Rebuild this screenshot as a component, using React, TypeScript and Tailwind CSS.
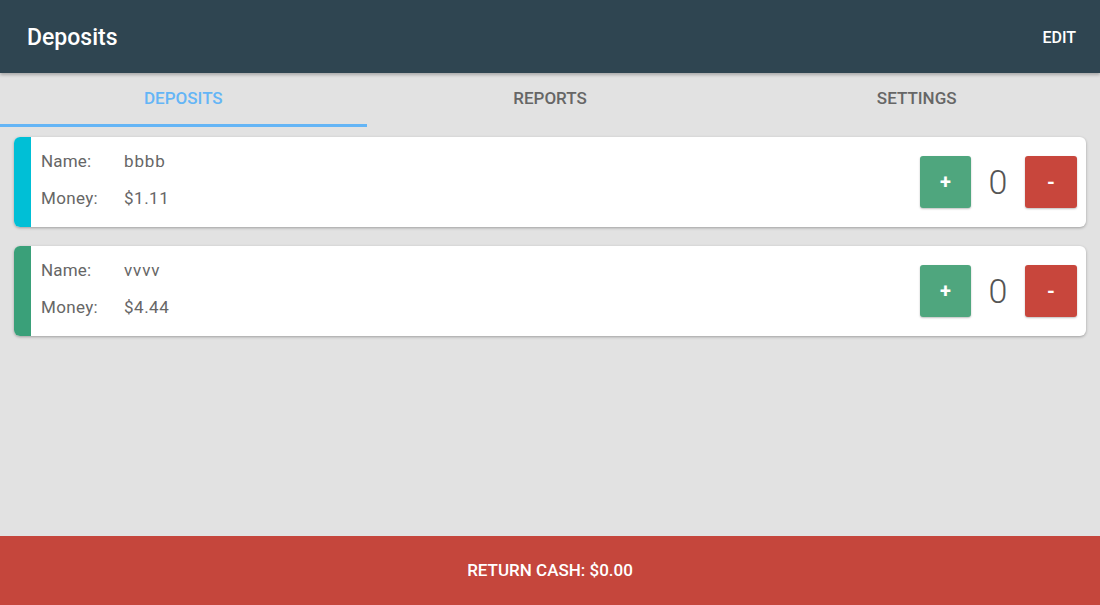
import { useState } from "react";

type Deposit = {
  id: number;
  name: string;
  money: string;
  stripe: string;
};

const deposits: Deposit[] = [
  { id: 1, name: "bbbb", money: "$1.11", stripe: "bg-[#00bfd6]" },
  { id: 2, name: "vvvv", money: "$4.44", stripe: "bg-[#3aa079]" },
];

const tabs = ["DEPOSITS", "REPORTS", "SETTINGS"];

function DepositCard({ deposit }: { deposit: Deposit }) {
  const [count, setCount] = useState(0);

  return (
    <div className="flex h-[90px] rounded-md bg-white shadow-[0_1px_3px_rgba(0,0,0,0.3)] overflow-hidden">
      <div className={`w-[17px] shrink-0 ${deposit.stripe}`} />
      <div className="flex flex-1 items-center pl-[10px] pr-[9px]">
        <div className="flex-1 self-start flex flex-col pt-[6px] text-[#666] text-[17px]">
          <div className="flex h-[37px] items-center">
            <span className="w-[83px] tracking-[0.01em]">Name:</span>
            <span className="tracking-[0.05em]">{deposit.name}</span>
          </div>
          <div className="flex h-[37px] items-center">
            <span className="w-[83px] tracking-[0.02em]">Money:</span>
            <span className="tracking-[0.03em]">{deposit.money}</span>
          </div>
        </div>
        <div className="flex items-center">
          <button
            onClick={() => setCount(count + 1)}
            className="w-[51px] h-[52px] rounded-[3px] bg-[#4fa67e] text-white text-[20px] font-bold shadow-[0_1px_2px_rgba(0,0,0,0.25)]"
          >
            +
          </button>
          <span className="w-[54px] text-center text-[34px] font-light text-[#555] leading-none">
            {count}
          </span>
          <button
            onClick={() => setCount(Math.max(0, count - 1))}
            className="w-[52px] h-[52px] rounded-[3px] bg-[#c8463c] text-white text-[20px] font-bold shadow-[0_1px_2px_rgba(0,0,0,0.25)]"
          >
            -
          </button>
        </div>
      </div>
    </div>
  );
}

export default function App() {
  const [active, setActive] = useState(0);

  return (
    <div className="flex flex-col h-[605px] w-full bg-[#e2e2e2] font-['Roboto',sans-serif]">
      {/* Toolbar */}
      <header className="relative z-10 flex items-center justify-between h-[73px] pt-[3px] pl-[27px] pr-[24px] bg-[#2f4551] shadow-[0_2px_3px_rgba(0,0,0,0.25)]">
        <h1 className="text-white text-[23px] font-medium pt-[1px]">Deposits</h1>
        <button className="text-white text-[16px] font-medium">EDIT</button>
      </header>

      {/* Tabs */}
      <nav className="flex h-[54px] bg-[#e2e2e2]">
        {tabs.map((tab, i) => (
          <button
            key={tab}
            onClick={() => setActive(i)}
            className={`flex-1 flex items-center justify-center pt-[1px] text-[17px] font-medium border-b-[3px] ${
              active === i
                ? "text-[#64b5f6] border-[#64b5f6]"
                : "text-[#666] border-transparent"
            }`}
          >
            {tab}
          </button>
        ))}
      </nav>

      {/* Deposit list */}
      <main className="flex-1 flex flex-col gap-[19px] px-[14px] pt-[10px]">
        {deposits.map((d) => (
          <DepositCard key={d.id} deposit={d} />
        ))}
      </main>

      {/* Footer action */}
      <button className="h-[69px] w-full bg-[#c5463c] text-white text-[17px] font-medium">
        RETURN CASH: $0.00
      </button>
    </div>
  );
}
